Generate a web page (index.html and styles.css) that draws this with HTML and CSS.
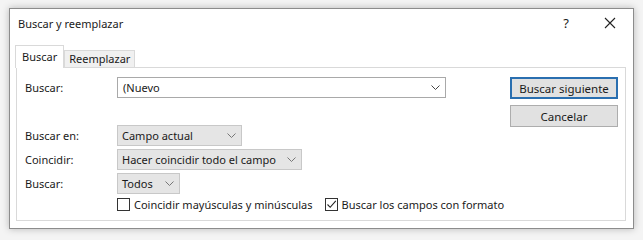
FILE: index.html
```html
<!DOCTYPE html>
<html lang="es">
<head>
    <meta charset="UTF-8" />
    <title>Buscar y reemplazar</title>
    <link rel="stylesheet" href="styles.css">
</head>
<body>
<div class="dialog">
    <div class="titlebar">
        <span class="title">Buscar y reemplazar</span>
        <span class="help">?</span>
        <span class="close">
            <svg width="12" height="12" viewBox="0 0 12 12"><path d="M1 1 L11 11 M11 1 L1 11" stroke="#222" stroke-width="1.1" fill="none"/></svg>
        </span>
    </div>

    <div class="tabs">
        <div class="tab tab-active">Buscar</div>
        <div class="tab">Reemplazar</div>
    </div>

    <div class="panel">
        <div class="form">
            <div class="row row-first">
                <label class="label">Buscar:</label>
                <div class="input">
                    <span>(Nuevo</span>
                    <svg class="chev" width="9" height="5" viewBox="0 0 9 5"><path d="M0.5 0.5 L4.5 4.5 L8.5 0.5" stroke="#444" stroke-width="1" fill="none"/></svg>
                </div>
            </div>
            <div class="row">
                <label class="label">Buscar en:</label>
                <div class="combo combo-campo">
                    <span>Campo actual</span>
                    <svg class="chev" width="9" height="5" viewBox="0 0 9 5"><path d="M0.5 0.5 L4.5 4.5 L8.5 0.5" stroke="#777" stroke-width="1" fill="none"/></svg>
                </div>
            </div>
            <div class="row">
                <label class="label">Coincidir:</label>
                <div class="combo combo-coincidir">
                    <span>Hacer coincidir todo el campo</span>
                    <svg class="chev" width="9" height="5" viewBox="0 0 9 5"><path d="M0.5 0.5 L4.5 4.5 L8.5 0.5" stroke="#777" stroke-width="1" fill="none"/></svg>
                </div>
            </div>
            <div class="row">
                <label class="label">Buscar:</label>
                <div class="combo combo-todos">
                    <span>Todos</span>
                    <svg class="chev" width="9" height="5" viewBox="0 0 9 5"><path d="M0.5 0.5 L4.5 4.5 L8.5 0.5" stroke="#777" stroke-width="1" fill="none"/></svg>
                </div>
            </div>
            <div class="checks">
                <div class="check">
                    <span class="box"></span>
                    <span>Coincidir mayúsculas y minúsculas</span>
                </div>
                <div class="check">
                    <span class="box">
                        <svg width="11" height="11" viewBox="0 0 11 11"><path d="M1.5 5.5 L4.2 8.3 L9.8 1.8" stroke="#222" stroke-width="1.1" fill="none"/></svg>
                    </span>
                    <span>Buscar los campos con formato</span>
                </div>
            </div>
        </div>

        <div class="buttons">
            <button class="btn btn-default">Buscar siguiente</button>
            <button class="btn">Cancelar</button>
        </div>
    </div>
</div>
</body>
</html>
```

FILE: styles.css
```css
body {
    margin: 0;
    padding: 8px 9px;
    background-color: #f4f4f4;
    font-family: "Noto Sans", "Open Sans", sans-serif;
    font-size: 11px;
    line-height: 15px;
    color: #1a1a1a;
    white-space: nowrap;
}

.dialog {
    width: 625px;
    height: 221px;
    box-sizing: border-box;
    background-color: #fff;
    border: 1px solid #8c8c8c;
    box-shadow: 0 0 7px rgba(0, 0, 0, 0.25);
    display: flex;
    flex-direction: column;
}

.titlebar {
    display: flex;
    flex-shrink: 0;
    align-items: center;
    height: 28px;
    padding-left: 8px;
}

.title {
    flex: 1;
}

.help {
    font-size: 13px;
    width: 14px;
    text-align: center;
    margin-right: 31px;
}

.close {
    display: flex;
    width: 12px;
    margin-right: 17px;
}

.tabs {
    display: flex;
    flex-shrink: 0;
    align-items: flex-end;
    margin-top: 8px;
    padding-left: 5px;
    height: 22px;
    position: relative;
    z-index: 1;
}

.tab {
    height: 17px;
    line-height: 16px;
    padding: 0 4px;
    background-color: #f0f0f0;
    border: 1px solid #d9d9d9;
    border-bottom: none;
    box-sizing: border-box;
}

.tab-active {
    height: 23px;
    line-height: 21px;
    padding: 0 6px;
    background-color: #fff;
    margin-bottom: -1px;
}

.panel {
    flex: 1;
    min-height: 0;
    margin: 0 7px 7px 6px;
    border: 1px solid #d9d9d9;
    display: flex;
    padding: 9px 7px 0 8px;
}

.form {
    display: flex;
    flex-direction: column;
    gap: 3px;
}

.row {
    display: flex;
    align-items: center;
}

.row-first {
    margin-bottom: 24px;
}

.label {
    width: 92px;
}

.input, .combo {
    display: flex;
    align-items: center;
    justify-content: space-between;
    height: 21px;
    box-sizing: border-box;
    padding: 0 5px 0 5px;
}

.input {
    width: 329px;
    border: 1px solid #a9a9a9;
    background-color: #fff;
}

.combo {
    border: 1px solid #c8c8c8;
    background-color: #e5e5e5;
    padding-left: 4px;
}

.combo-campo {
    width: 125px;
}

.combo-coincidir {
    width: 185px;
}

.combo-todos {
    width: 63px;
}

.checks {
    display: flex;
    gap: 12px;
    margin-left: 92px;
}

.check {
    display: flex;
    align-items: center;
    gap: 4px;
}

.box {
    width: 13px;
    height: 13px;
    box-sizing: border-box;
    border: 1px solid #333;
    display: flex;
    align-items: center;
    justify-content: center;
}

.buttons {
    margin-left: auto;
    display: flex;
    flex-direction: column;
    gap: 6px;
}

.btn {
    width: 108px;
    height: 22px;
    font-family: inherit;
    font-size: 11.5px;
    color: #1a1a1a;
    background-color: #e1e1e1;
    border: 1px solid #adadad;
    padding: 0;
}

.btn-default {
    border: 2px solid #2a6fb0;
}
```
